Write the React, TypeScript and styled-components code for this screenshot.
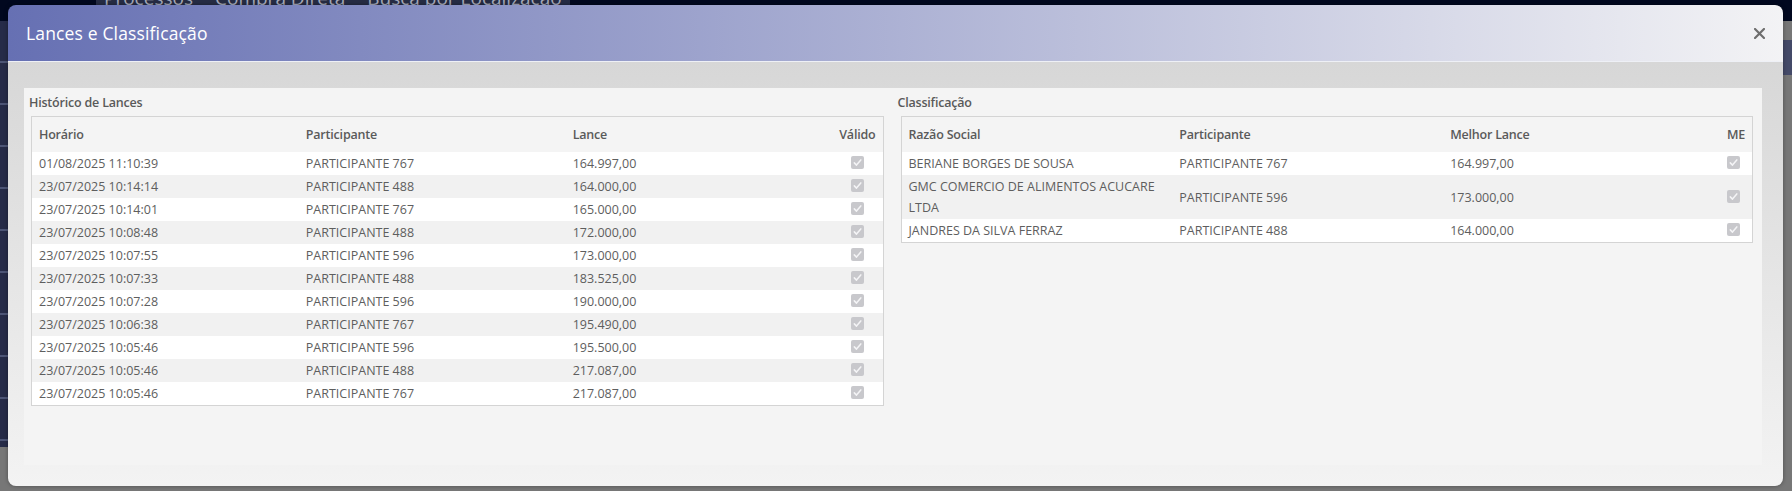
import React from "react";
import styled, { createGlobalStyle } from "styled-components";

const GlobalStyle = createGlobalStyle`
  html, body {
    margin: 0;
    padding: 0;
    background: #777777;
  }
  * { box-sizing: border-box; }
`;

const Page = styled.div`
  position: relative;
  width: 1792px;
  height: 491px;
  overflow: hidden;
  display: flex;
  flex-direction: column;
  background: #777777;
  font-family: "Open Sans", "Liberation Sans", sans-serif;
`;

const TopNav = styled.div`
  height: 21px;
  flex: none;
  background: #01081f;
  display: flex;
  align-items: flex-end;
`;

const NavGroup = styled.div`
  margin-left: 96px;
  height: 21px;
  padding: 0 8px;
  display: flex;
  gap: 22px;
  align-items: flex-end;
  background: #262c44;
`;

const NavItem = styled.span`
  font-family: "Open Sans", sans-serif;
  font-size: 19px;
  line-height: 19px;
  color: #a7abbb;
  transform: translateY(-13px);
`;

const PageBody = styled.div`
  flex: 1;
  display: flex;
`;

const SideBar = styled.div`
  width: 9px;
  height: 426px;
  background: #262b48;
  display: flex;
  flex-direction: column;
`;

const SideItem = styled.div`
  height: 42px;
  border-bottom: 2px solid #4d5576;
`;

const MainArea = styled.div`
  flex: 1;
  display: flex;
  justify-content: flex-end;
`;

const RightBlock = styled.div`
  width: 9px;
  height: 35px;
  margin-top: 19px;
  background: #444a68;
`;

const Dialog = styled.div`
  position: absolute;
  left: 8px;
  top: 5px;
  width: 1775px;
  height: 481px;
  border-radius: 8px;
  overflow: hidden;
  display: flex;
  flex-direction: column;
  box-shadow: 0 0 4px rgba(0, 0, 0, 0.35);
`;

const Header = styled.div`
  height: 57px;
  flex: none;
  display: flex;
  align-items: center;
  justify-content: space-between;
  padding: 0 18px 0 18px;
  background: linear-gradient(90deg, #6670b3 0%, #f3f3f5 100%);
  border-bottom: 1px solid #eef0f6;
`;

const Title = styled.h1`
  margin: 0;
  font-family: "Open Sans", sans-serif;
  font-weight: 500;
  font-size: 17.5px;
  color: #ffffff;
  letter-spacing: 0.15px;
`;

const CloseButton = styled.button`
  border: 0;
  background: transparent;
  padding: 0;
  width: 12px;
  height: 12px;
  display: flex;
  align-items: center;
  justify-content: center;
  cursor: pointer;
`;

const Body = styled.div`
  flex: 1;
  display: flex;
  padding: 26px 21px 21px 16px;
  background: linear-gradient(180deg, #d7d7d7 0%, #f3f3f3 100%);
`;

const Panel = styled.div`
  flex: 1;
  background: #f4f4f4;
  display: grid;
  grid-template-columns: 1fr 1fr;
  column-gap: 17px;
  align-items: start;
  padding: 0 9px 0 7px;
`;

const Section = styled.section`
  display: flex;
  flex-direction: column;
`;

const SectionLabel = styled.div<{ $shift: number }>`
  font-family: "Open Sans", sans-serif;
  font-weight: 600;
  font-size: 12.5px;
  line-height: 18px;
  color: #5a5a5a;
  padding-top: 6px;
  margin-bottom: 4px;
  margin-left: ${(p) => p.$shift}px;
  letter-spacing: -0.2px;
`;

const Table = styled.div`
  border: 1px solid #d4d4d4;
  background: #ffffff;
`;

const Row = styled.div<{ $last: number; $alt?: boolean; $head?: boolean }>`
  display: grid;
  grid-template-columns: repeat(3, 1fr) ${(p) => p.$last}px;
  align-items: center;
  min-height: ${(p) => (p.$head ? 35 : 23)}px;
  background: ${(p) => (p.$head ? "#f4f4f4" : p.$alt ? "#f1f1f1" : "#ffffff")};
`;

const Cell = styled.div<{ $align?: "left" | "right" | "center"; $head?: boolean }>`
  padding: 1px 7px;
  line-height: 21px;
  font-family: "Open Sans", sans-serif;
  font-size: 12.5px;
  font-weight: ${(p) => (p.$head ? 600 : 400)};
  color: ${(p) => (p.$head ? "#5a5a5a" : "#5e5e5e")};
  text-align: ${(p) => p.$align || "left"};
  letter-spacing: ${(p) => (p.$head ? "-0.2px" : "0")};
  display: flex;
  justify-content: ${(p) =>
    p.$align === "right" ? "flex-end" : p.$align === "center" ? "center" : "flex-start"};
`;

const CheckWrap = styled.span`
  display: inline-flex;
  width: 13px;
  height: 13px;
  transform: translateY(-1px);
`;

function Check() {
  return (
    <CheckWrap>
      <svg width="13" height="13" viewBox="0 0 13 13">
        <rect x="0" y="0" width="13" height="13" rx="2" fill="#c8c8cc" />
        <path
          d="M3.3 6.9 L5.5 9.1 L9.8 3.9"
          fill="none"
          stroke="#f4f4f6"
          strokeWidth="1.5"
          strokeLinecap="round"
          strokeLinejoin="round"
        />
      </svg>
    </CheckWrap>
  );
}

function CloseIcon() {
  return (
    <svg width="11" height="11" viewBox="0 0 11 11">
      <path d="M1 1 L10 10 M10 1 L1 10" stroke="#6e6e6e" strokeWidth="2.2" strokeLinecap="square" />
    </svg>
  );
}

const bids: [string, string, string][] = [
  ["01/08/2025 11:10:39", "PARTICIPANTE 767", "164.997,00"],
  ["23/07/2025 10:14:14", "PARTICIPANTE 488", "164.000,00"],
  ["23/07/2025 10:14:01", "PARTICIPANTE 767", "165.000,00"],
  ["23/07/2025 10:08:48", "PARTICIPANTE 488", "172.000,00"],
  ["23/07/2025 10:07:55", "PARTICIPANTE 596", "173.000,00"],
  ["23/07/2025 10:07:33", "PARTICIPANTE 488", "183.525,00"],
  ["23/07/2025 10:07:28", "PARTICIPANTE 596", "190.000,00"],
  ["23/07/2025 10:06:38", "PARTICIPANTE 767", "195.490,00"],
  ["23/07/2025 10:05:46", "PARTICIPANTE 596", "195.500,00"],
  ["23/07/2025 10:05:46", "PARTICIPANTE 488", "217.087,00"],
  ["23/07/2025 10:05:46", "PARTICIPANTE 767", "217.087,00"],
];

const ranking: [string, string, string][] = [
  ["BERIANE BORGES DE SOUSA", "PARTICIPANTE 767", "164.997,00"],
  ["GMC COMERCIO DE ALIMENTOS ACUCARE LTDA", "PARTICIPANTE 596", "173.000,00"],
  ["JANDRES DA SILVA FERRAZ", "PARTICIPANTE 488", "164.000,00"],
];

function DataTable({
  headers,
  rows,
  last,
}: {
  headers: string[];
  rows: [string, string, string][];
  last: number;
}) {
  return (
    <Table>
      <Row $last={last} $head>
        <Cell $head>{headers[0]}</Cell>
        <Cell $head>{headers[1]}</Cell>
        <Cell $head>{headers[2]}</Cell>
        <Cell $head $align="right">
          {headers[3]}
        </Cell>
      </Row>
      {rows.map((r, i) => (
        <Row key={i} $last={last} $alt={i % 2 === 1}>
          <Cell>{r[0]}</Cell>
          <Cell>{r[1]}</Cell>
          <Cell>{r[2]}</Cell>
          <Cell $align="center">
            <Check />
          </Cell>
        </Row>
      ))}
    </Table>
  );
}

export default function App() {
  return (
    <>
      <GlobalStyle />
      <Page>
        <TopNav>
          <NavGroup>
            <NavItem>Processos</NavItem>
            <NavItem>Compra Direta</NavItem>
            <NavItem>Busca por Localização</NavItem>
          </NavGroup>
        </TopNav>
        <PageBody>
          <SideBar>
            {Array.from({ length: 10 }).map((_, i) => (
              <SideItem key={i} />
            ))}
          </SideBar>
          <MainArea>
            <RightBlock />
          </MainArea>
        </PageBody>

        <Dialog role="dialog" aria-label="Lances e Classificação">
          <Header>
            <Title>Lances e Classificação</Title>
            <CloseButton aria-label="Fechar">
              <CloseIcon />
            </CloseButton>
          </Header>
          <Body>
            <Panel>
              <Section>
                <SectionLabel $shift={-2}>Histórico de Lances</SectionLabel>
                <DataTable
                  headers={["Horário", "Participante", "Lance", "Válido"]}
                  rows={bids}
                  last={50}
                />
              </Section>
              <Section>
                <SectionLabel $shift={-3}>Classificação</SectionLabel>
                <DataTable
                  headers={["Razão Social", "Participante", "Melhor Lance", "ME"]}
                  rows={ranking}
                  last={38}
                />
              </Section>
            </Panel>
          </Body>
        </Dialog>
      </Page>
    </>
  );
}
